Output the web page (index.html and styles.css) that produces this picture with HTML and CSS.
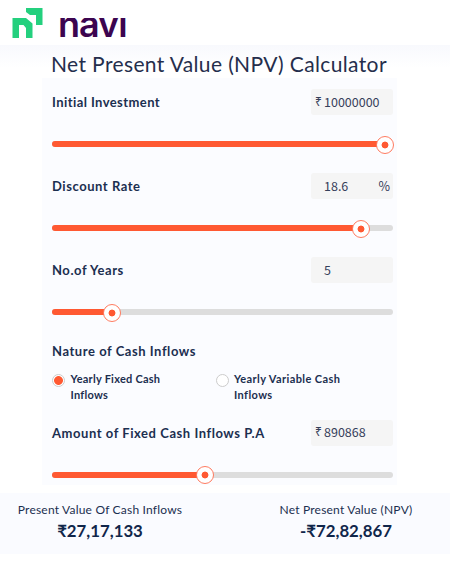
FILE: index.html
```html
<!DOCTYPE html>
<html lang="en">
<head>
<meta charset="utf-8">
<title>Net Present Value (NPV) Calculator</title>
<link rel="stylesheet" href="styles.css">
</head>
<body>
<header class="header">
  <svg class="mark" width="32" height="31" viewBox="0 0 32 31" fill="#24d07e"><path d="M14 0H30.5V17H24V7H18L14 4Z"/><path d="M.5 10H14L20.500 15.500V30H14V20L11.500 17H7V30H.5Z"/></svg>
  <span class="wordmark">navi</span>
</header>
<main>
  <h1 class="title"><span>Net Present Value (NPV) Calculator</span></h1>
  <section class="panel">
    <div class="field">
      <div class="row"><span class="label l1">Initial Investment</span><div class="box"><span class="rupee">₹</span><span class="num">10000000</span></div></div>
      <div class="track"><div class="fill" style="width:333px"><i class="knob"></i></div></div>
    </div>
    <div class="field">
      <div class="row"><span class="label l2">Discount Rate</span><div class="box"><span class="rupee"></span><span class="num">18.6</span><span class="percent">%</span></div></div>
      <div class="track"><div class="fill" style="width:308.500px"><i class="knob"></i></div></div>
    </div>
    <div class="field">
      <div class="row"><span class="label l3">No.of Years</span><div class="box"><span class="rupee"></span><span class="num">5</span></div></div>
      <div class="track"><div class="fill" style="width:60px"><i class="knob"></i></div></div>
    </div>
    <div class="nature">
      <span class="label l4">Nature of Cash Inflows</span>
      <div class="options">
        <div class="option"><i class="radio on"></i><span class="o1">Yearly Fixed Cash<br>Inflows</span></div>
        <div class="option"><i class="radio"></i><span class="o2">Yearly Variable Cash<br>Inflows</span></div>
      </div>
    </div>
    <div class="field">
      <div class="row"><span class="label l5">Amount of Fixed Cash Inflows P.A</span><div class="box"><span class="rupee">₹</span><span class="num">890868</span></div></div>
      <div class="track"><div class="fill" style="width:152.500px"><i class="knob"></i></div></div>
    </div>
  </section>
</main>
<footer class="results">
  <div class="result"><span class="caption c1">Present Value Of Cash Inflows</span><strong class="v1">₹27,17,133</strong></div>
  <div class="result second"><span class="caption c2">Net Present Value (NPV)</span><strong class="v2">-₹72,82,867</strong></div>
</footer>
</body>
</html>
```
FILE: styles.css
```css
* { box-sizing: border-box; }
body { margin: 0; width: 450px; height: 561px; background: #fff; color: #1b2f50; font-family: Lato, "Noto Sans", sans-serif; overflow: hidden; white-space: nowrap; }
.header { height: 45px; display: flex; padding: 8px 0 0 12px; }
.mark { display: block; flex: none; }
.wordmark { margin: 10px 0 0 14px; height: 20px; line-height: 13px; font-family: Inter, sans-serif; font-weight: 600; font-size: 36px; letter-spacing: -1px; color: #3c0550; clip-path: inset(0 -10px 0 -10px); }
.title { margin: 0; height: 33px; padding-left: 51px; background: linear-gradient(#f8f9fd, #fff 70%); font-size: 21px; line-height: 37px; font-weight: 400; letter-spacing: .370px; color: #252e4c; }
.panel { margin-left: 42px; width: 355px; height: 407px; padding: 11px 4px 0 10px; background: #fbfcff; }
.field { height: 84px; width: 341px; }
.row { height: 26px; display: flex; justify-content: space-between; align-items: center; }
.label { font-size: 13px; font-weight: 700; line-height: 18px; letter-spacing: .550px; }
.l1 { letter-spacing: .420px; }
.box { width: 82px; height: 26px; border-radius: 3px; background: #f5f5f5; display: flex; align-items: center; font-family: "Noto Sans CJK SC", sans-serif; font-size: 12.500px; line-height: 18px; color: #35405a; padding: 0 0 1px 4px; }
.rupee { width: 9px; font-family: "Noto Sans", sans-serif; font-size: 12px; }
.num { flex: 1; }
.percent { margin-right: 3px; }
.track { margin-top: 26px; height: 6px; border-radius: 3px; background: #ddd; }
.fill { height: 6px; border-radius: 3px; background: #ff5932; display: flex; justify-content: flex-end; align-items: center; }
.knob { flex: none; width: 18px; height: 18px; margin: 1px -9px 0 0; border: 1px solid #ff7b60; border-radius: 50%; background: radial-gradient(circle, #ff5932 3px, #fff 3.800px); }
.nature { height: 78.500px; padding-top: 1px; }
.nature .label { display: block; }
.options { display: flex; margin-top: 11px; }
.option { width: 163.500px; display: flex; font-size: 11px; line-height: 16px; font-weight: 700; letter-spacing: .250px; }
.o2 { letter-spacing: .400px; }
.radio { width: 13px; height: 13px; border: 1px solid #ccc; border-radius: 50%; background: #fff; margin: 3px 5.500px 0 0; flex: none; }
.on { background: radial-gradient(circle, #ff5932 4px, #fff 4.800px); }
.results { margin-top: 8px; height: 61px; background: #fafbff; display: flex; }
.result { width: 200px; display: flex; flex-direction: column; align-items: center; padding-top: 9px; }
.second { margin-left: 46px; }
.caption { font-size: 12px; line-height: 16px; letter-spacing: .200px; }
.result strong { font-size: 16.800px; line-height: 25px; color: #10264a; }
```
